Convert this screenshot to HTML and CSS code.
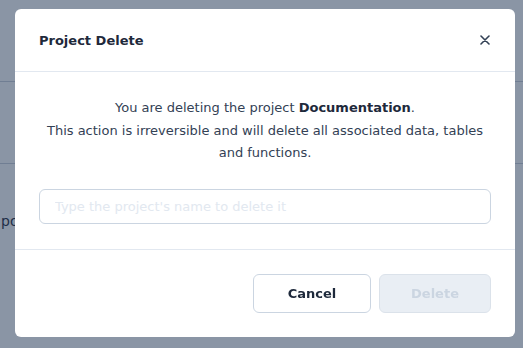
FILE: index.html
```html
<!DOCTYPE html>
<html lang="en">
<head>
  <meta charset="UTF-8" />
  <title>Project Delete</title>
  <link rel="stylesheet" href="styles.css">
</head>
<body>
  <!-- page derriere la modale -->
  <div class="page">
    <div class="page-row"></div>
    <div class="page-row"></div>
    <div class="page-text">po</div>
  </div>

  <div class="overlay">
    <div class="modal">
      <div class="modal-header">
        <h3>Project Delete</h3>
        <button class="close-btn" aria-label="Close">
          <svg width="10" height="10" viewBox="0 0 10 10">
            <path d="M1 1 L9 9 M9 1 L1 9" stroke="#334155" stroke-width="1.6" stroke-linecap="round"/>
          </svg>
        </button>
      </div>

      <div class="modal-body">
        <p>You are deleting the project <strong>Documentation</strong>.<br>
        This action is irreversible and will delete all associated data, tables and functions.</p>
        <input type="text" placeholder="Type the project's name to delete it">
      </div>

      <div class="modal-footer">
        <button class="btn-cancel">Cancel</button>
        <button class="btn-delete" disabled>Delete</button>
      </div>
    </div>
  </div>
</body>
</html>
```

FILE: styles.css
```css
body {
  margin: 0;
  padding: 0;
  font-family: 'DejaVu Sans', sans-serif;
  background-color: #fff;
  color: #334155;
}

.page {
  height: 348px;
  overflow: hidden;
}

.page-row {
  height: 81px;
  border-bottom: 1px solid #c8d0da;
}

.page-text {
  padding: 49px 0 0 1px;
  font-size: 14px;
  color: #1e293b;
}

.overlay {
  position: fixed;
  inset: 0;
  background-color: rgba(30, 52, 82, 0.52);
  display: flex;
  justify-content: flex-start;
  padding: 9px 0 0 15px;
}

.modal {
  width: 500px;
  height: 328px;
  background-color: #fff;
  border-radius: 6px;
  box-sizing: border-box;
  display: flex;
  flex-direction: column;
}

.modal-header {
  height: 63px;
  flex-shrink: 0;
  display: flex;
  align-items: center;
  justify-content: space-between;
  padding: 0 24px;
  border-bottom: 1px solid #e2e8f0;
  box-sizing: border-box;
}

.modal-header h3 {
  margin: 0;
  font-size: 13px;
  font-weight: 700;
  color: #1e293b;
}

.close-btn {
  background: transparent;
  border: none;
  padding: 0;
  width: 10px;
  height: 10px;
  cursor: pointer;
  display: flex;
  margin-right: 1px;
}

.modal-body {
  padding: 25px 24px 25px;
  border-bottom: 1px solid #e2e8f0;
}

.modal-body p {
  margin: 0 0 24px;
  text-align: center;
  font-size: 13px;
  line-height: 22.5px;
  color: #334155;
}

.modal-body strong {
  color: #1e293b;
}

.modal-body input {
  display: block;
  width: 100%;
  height: 35px;
  box-sizing: border-box;
  padding: 0 15px;
  border: 1px solid #cbd5e1;
  border-radius: 6px;
  font-family: inherit;
  font-size: 13px;
  outline: none;
}

.modal-body input::placeholder {
  color: #e2e8f0;
}

.modal-footer {
  display: flex;
  justify-content: flex-end;
  gap: 8px;
  padding: 24px;
}

.modal-footer button {
  height: 39px;
  border-radius: 6px;
  font-family: inherit;
  font-size: 13px;
  font-weight: 700;
}

.btn-cancel {
  width: 118px;
  background-color: #fff;
  border: 1px solid #cbd5e1;
  color: #1e293b;
  cursor: pointer;
}

.btn-delete {
  width: 112px;
  background-color: #e9eef4;
  border: 1px solid #dbe2ea;
  color: #cbd5e1;
}
```
